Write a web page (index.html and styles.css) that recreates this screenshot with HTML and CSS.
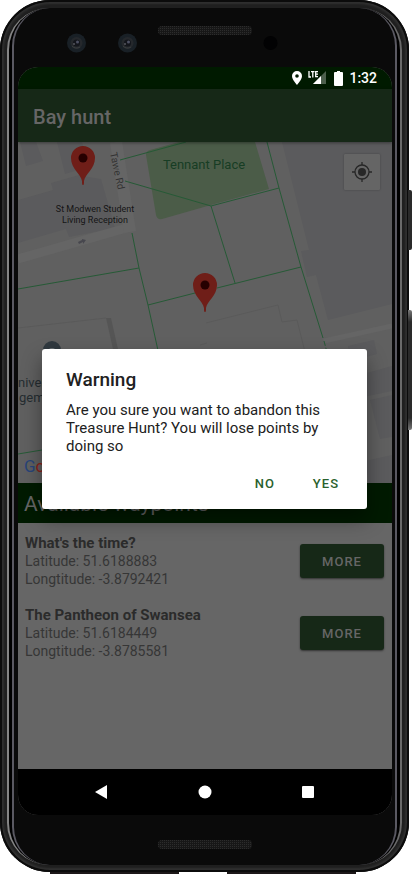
FILE: index.html
```html
<!DOCTYPE html>
<html lang="en">
<head>
<meta charset="utf-8">
<meta name="viewport" content="width=device-width, initial-scale=1">
<title>Bay hunt</title>
<link rel="stylesheet" href="styles.css">
</head>
<body>
<div class="phone">
  <span class="key key-power"></span>
  <span class="key key-volume"></span>
  <div class="rim">
    <div class="face">
      <svg class="forehead" viewBox="18 8 374 59" aria-hidden="true">
        <defs>
          <pattern id="mesh" width="2" height="2" patternUnits="userSpaceOnUse">
            <rect width="2" height="2" fill="#171717"/><rect width="1" height="1" fill="#2c2c2c"/>
          </pattern>
        </defs>
        <rect x="158" y="26" width="94" height="9" rx="4" fill="url(#mesh)"/>
        <g id="lens">
          <circle cx="76.500" cy="43" r="9.500" fill="#192026"/>
          <circle cx="76.500" cy="43" r="6" fill="#25282c"/>
          <circle cx="76.500" cy="43" r="3.500" fill="#14161c"/>
          <path d="M72 46a6 6 0 0 0 8 1" stroke="#3a3d3f" fill="none"/>
          <circle cx="77.500" cy="42" r="1.500" fill="#4d5062"/>
          <circle cx="74" cy="44" r="1" fill="#55565c"/>
        </g>
        <use href="#lens" x="51"/>
        <circle cx="270.500" cy="43" r="7" fill="#020203"/>
      </svg>

      <div class="screen">
        <div class="status">
          <svg width="10" height="14" viewBox="0 0 10 14" aria-hidden="true"><path fill="#fff" fill-rule="evenodd" d="M5 0a5 5 0 0 0-5 5c0 3.600 5 9 5 9s5-5.400 5-9a5 5 0 0 0-5-5zm0 3.200a1.800 1.800 0 1 1 0 3.600 1.800 1.800 0 0 1 0-3.600z"/></svg>
          <svg class="signal" width="18" height="14" viewBox="0 0 18 14" role="img" aria-label="LTE signal">
            <path d="M18 0v13H5z" fill="#4d5f4d"/><path d="M13 5v8H5z" fill="#fff"/>
            <path d="M1 0v6h2M3 .7h3.500M4.800 1v5.500M10 .7H7.700v5H10M7.700 3.200H10" stroke="#fff" stroke-width="1.300" fill="none"/>
          </svg>
          <svg class="battery" width="9" height="15" viewBox="0 0 9 15" aria-hidden="true"><path fill="#fff" d="M3 0h3v1h2q1 0 1 1v12q0 1-1 1H1q-1 0-1-1V2q0-1 1-1h2z"/></svg>
          <time class="clock">1:32</time>
        </div>

        <div class="app">
          <header class="bar"><h1>Bay hunt</h1></header>
          <div class="map">
            <svg class="tiles" viewBox="18 142 374 341" preserveAspectRatio="xMidYMid slice" role="img" aria-label="Map">
              <rect x="18" y="142" width="374" height="341" fill="#606060"/>
              <g fill="#5b5b5d">
                <path d="M20 142h16l7 19-17 5zM57 142h25l7 25-24 7z"/>
                <path d="M18 200l35-10-2-7 28-8 10 2 12 2 14 49-46 9-3-8-48 14z"/>
                <path d="M282 142h110v162l-64 16-12-45-9 2-6-26 8-1z"/>
                <path d="M348 346l26-6 3 14-26 7zM360 375l32-9v25l-29 6zM370 400l22-5v42l-12 2zM365 461l27-6v28h-23z"/>
              </g>
              <g fill="none" stroke="#656565" stroke-width="8">
                <path d="M18 259l112-32" stroke-width="9"/>
                <path d="M116 142l14 90" stroke-width="12"/>
                <path d="M324 341l68-15" stroke-width="5"/>
              </g>
              <path d="M106 318h5l9 40h-5z" fill="#555"/>
              <g fill="none" stroke="#5a5a5a">
                <path d="M18 328l88-10M206 323l72-18 4 17 15-2 10 40M207 343l-7 2"/>
              </g>
              <path d="M146 155q0-4 4-5l29-8h76l3 10 11 37-58 16-49 14q-5 1-6-4z" fill="#4b5c48"/>
              <g fill="none" stroke="#265a36">
                <path d="M120 160l66-18M125 181l86 25 68-18M267 142l12 46 22 79 22 71M211 206l24 77M217 288l84-21M132 233l7 35 9 37 11 50M18 289l121-21M148 305l47-12M18 454l30-5"/>
                <path d="M324 341l4 15" stroke-dasharray="5 2"/>
              </g>
              <path d="M78 242l4-2v-1l4 1-3 4v-2l-4 2z" fill="#47474e"/>
              <circle cx="52" cy="350" r="9" fill="#30393f"/><circle cx="52" cy="352" r="4" fill="#697074"/>
              <g class="place">
                <text x="95" y="212">St Modwen Student</text>
                <text x="95" y="223">Living Reception</text>
              </g>
              <text class="park" x="204" y="169">Tennant Place</text>
              <text class="road" transform="translate(110 153) rotate(78)">Tawe Rd</text>
              <g class="campus"><text x="18" y="387">niver</text><text x="19" y="402">gem</text></g>
              <text class="logo" x="24" y="472"><tspan fill="#284479">G</tspan><tspan fill="#8d201b">o</tspan></text>
              <g id="pin">
                <path d="M83 185c-1 0-1-1-1-4-1-7-11-12-11-23a12 12 0 0 1 24 0c0 11-10 16-11 23 0 3 0 4-1 4z" fill="#6f1e18"/>
                <circle cx="83" cy="158" r="4.500" fill="#260000"/>
              </g>
              <use href="#pin" x="122" y="127"/>
            </svg>
            <button class="locate" type="button" aria-label="My location">
              <svg width="20" height="20" viewBox="0 0 20 20" aria-hidden="true"><circle cx="10" cy="10" r="4" fill="#272727"/><circle cx="10" cy="10" r="7" fill="none" stroke="#272727" stroke-width="1.300"/><path d="M10 0v3M10 17v3M0 10h3M17 10h3" stroke="#272727" stroke-width="1.300"/></svg>
            </button>
          </div>
          <h2 class="heading">Available waypoints</h2>
          <ul class="waypoints">
            <li>
              <div><h3>What's the time?</h3><p>Latitude: 51.6188883</p><p>Longtitude: -3.8792421</p></div>
              <button class="more" type="button">MORE</button>
            </li>
            <li>
              <div><h3>The Pantheon of Swansea</h3><p>Latitude: 51.6184449</p><p>Longtitude: -3.8785581</p></div>
              <button class="more" type="button">MORE</button>
            </li>
          </ul>
          <div class="overlay">
            <dialog class="dialog" open aria-labelledby="warning">
              <h2 id="warning">Warning</h2>
              <p>Are you sure you want to abandon this Treasure Hunt? You will lose points by doing so</p>
              <div class="actions"><button type="button">NO</button><button type="button">YES</button></div>
            </dialog>
          </div>
        </div>

        <nav class="nav">
          <button type="button" aria-label="Back"><svg width="14" height="14" viewBox="0 0 14 14"><path d="M12 0v14L0 7z" fill="#fff"/></svg></button>
          <button type="button" aria-label="Home"><svg width="14" height="14" viewBox="0 0 14 14"><circle cx="7" cy="7" r="6.500" fill="#fff"/></svg></button>
          <button type="button" aria-label="Recent apps"><svg width="14" height="14" viewBox="0 0 14 14"><rect x="1" y="1" width="12" height="12" rx="1" fill="#fff"/></svg></button>
        </nav>
      </div>

      <svg class="chin" viewBox="18 815 374 50" aria-hidden="true">
        <rect x="158" y="840" width="94" height="9" rx="4" fill="url(#mesh)"/>
      </svg>
    </div>
  </div>
</div>
</body>
</html>
```
FILE: styles.css
```css
* { box-sizing: border-box; }
body {
  margin: 0;
  background: #fff;
  font-family: Roboto, sans-serif;
}
h1, h2, h3, p, ul { margin: 0; padding: 0; }
ul { list-style: none; }
button { border: 0; padding: 0; font-family: inherit; }
svg { display: block; }

/* Device frame */
.phone {
  position: relative;
  display: flex;
  min-height: calc(100vh - 2px);
  margin: 0 3px 2px 0;
  padding: 8px 7px 7px;
  border-radius: 50px;
  background: #1f1f1f;
  box-shadow: inset 0 0 0 2px #0b0b0b, inset 0 0 2px 4px #303030;
}
.phone::after {
  content: "";
  position: absolute;
  bottom: -2px;
  left: 50px;
  right: 53px;
  height: 2px;
  background: linear-gradient(90deg, #1c1718 42%, #fff 42% 58%, #1c1718 58%);
}
.key {
  position: absolute;
  right: -3px;
  width: 4px;
  border-radius: 0 2px 2px 0;
  background: #2a2a2a;
}
.key-power { top: 190px; height: 60px; }
.key-volume { top: 310px; height: 120px; background: linear-gradient(#777, #2a2a2a 10% 90%, #777); }
.rim {
  display: flex;
  flex: 1;
  min-width: 0;
  padding: 0 3px;
  border: solid #0d0d0d;
  border-width: 0 2px;
  border-color: #0d0d0d #6a6a6a #0d0d0d #858585;
  border-radius: 42px;
  background: #000;
}
.face {
  display: flex;
  flex-direction: column;
  flex: 1;
  min-width: 0;
  padding: 0 3px 0 4px;
  border: solid #5a5962;
  border-width: 0 2px;
  border-radius: 38px;
  background: #0a0a0a;
}
.screen {
  display: flex;
  flex-direction: column;
  flex: 1;
  overflow: hidden;
  border-radius: 20px;
  background: #666;
}

/* System bars */
.status {
  display: flex;
  align-items: center;
  justify-content: flex-end;
  height: 22px;
  padding-right: 15px;
  background: #001a00;
  color: #fff;
}
.signal { margin-left: 6px; }
.battery { margin-left: 8px; }
.clock {
  margin-left: 6px;
  font-size: 14px;
  font-weight: 500;
}
.nav {
  display: flex;
  align-items: center;
  justify-content: center;
  gap: 89px;
  height: 46px;
  background: #000;
}
.nav button { background: none; }

/* App */
.app {
  position: relative;
  display: flex;
  flex-direction: column;
  flex: 1;
}
.bar {
  z-index: 1;
  display: flex;
  align-items: center;
  height: 53px;
  padding: 2px 15px 0;
  background: #162817;
  box-shadow: 0 1px 3px rgba(0, 0, 0, .4);
  color: #666;
}
.bar h1 { font-size: 20px; font-weight: 500; }
.map { position: relative; height: 341px; }
.tiles { width: 100%; height: 100%; }
.place {
  fill: #151515;
  font-size: 9px;
  text-anchor: middle;
}
.park {
  fill: #173d24;
  font-size: 13px;
  text-anchor: middle;
}
.road { fill: #333; font-size: 10px; }
.campus { fill: #252d31; font-size: 13px; }
.logo { font-size: 17px; }
.locate {
  position: absolute;
  top: 12px;
  right: 12px;
  display: grid;
  place-items: center;
  width: 36px;
  height: 36px;
  border-radius: 1px;
  background: #656565;
  box-shadow: 0 0 2px rgba(0, 0, 0, .3);
}
.heading {
  height: 40px;
  padding-left: 6px;
  background: #001a00;
  color: #666;
  font-size: 21px;
  font-weight: 400;
  line-height: 42px;
}
.waypoints {
  display: grid;
  gap: 18px;
  padding: 11px 8px 0 7px;
  color: #363636;
  font-size: 14px;
  line-height: 18px;
}
.waypoints li {
  display: flex;
  align-items: center;
  justify-content: space-between;
}
.waypoints h3 {
  color: #2b2b2b;
  font-size: 15px;
  font-weight: 700;
}
.more {
  width: 84px;
  height: 34px;
  border-radius: 3px;
  background: #162817;
  box-shadow: 0 1px 2px rgba(0, 0, 0, .5);
  color: #666;
  font-size: 13px;
  font-weight: 500;
  letter-spacing: 1px;
}

/* Confirmation dialog */
.overlay {
  position: absolute;
  inset: 0;
  z-index: 2;
  display: grid;
  align-items: center;
  padding: 0 25px 0 24px;
}
.dialog {
  position: static;
  width: 100%;
  margin: 0;
  padding: 20px 20px 8px 24px;
  border: 0;
  border-radius: 3px;
  background: #fff;
  box-shadow: 0 10px 20px rgba(0, 0, 0, .4);
  color: #212121;
}
.dialog h2 {
  font-size: 19px;
  font-weight: 500;
  line-height: 22px;
}
.dialog p {
  margin-top: 10px;
  font-size: 15px;
  line-height: 18px;
}
.actions {
  display: flex;
  justify-content: flex-end;
  margin-top: 10px;
}
.actions button {
  height: 36px;
  padding: 0 8px;
  background: none;
  color: #2a612d;
  font-size: 13px;
  font-weight: 500;
  letter-spacing: 1px;
}
.actions button + button { margin-left: 22px; }
```
